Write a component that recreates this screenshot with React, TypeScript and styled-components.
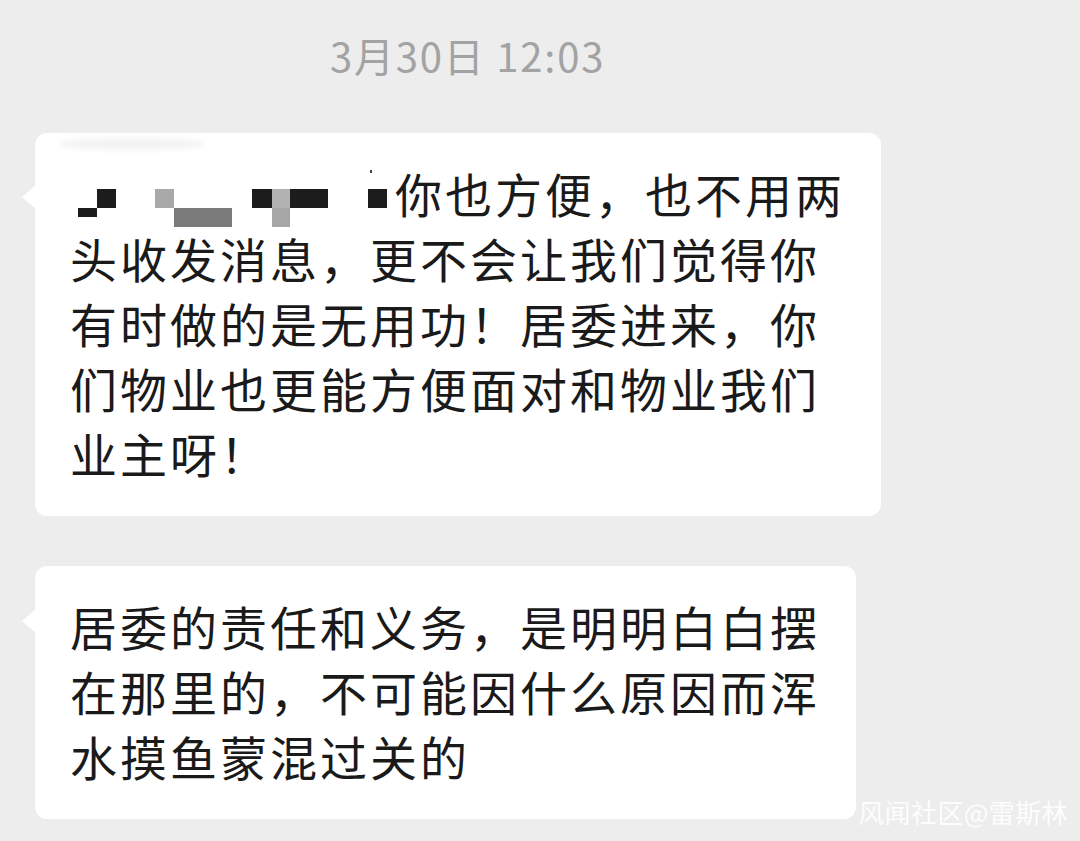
import styled, { createGlobalStyle } from "styled-components";

const GlobalStyle = createGlobalStyle`
  html, body {
    margin: 0;
    padding: 0;
    background: #ededed;
  }
  body {
    font-family: "Noto Sans CJK SC", "Noto Sans", sans-serif;
  }
`;

const firstBubble = [
  "头收发消息，更不会让我们觉得你",
  "有时做的是无用功！居委进来，你",
  "们物业也更能方便面对和物业我们",
  "业主呀！",
];

const secondBubble = [
  "居委的责任和义务，是明明白白摆",
  "在那里的，不可能因什么原因而浑",
  "水摸鱼蒙混过关的",
];

function Censored(): JSX.Element {
  return (
    <CensorSvg width={325} height={65} viewBox="0 0 325 65">
      <rect x={8} y={48} width={19} height={9} fill="#1c1c1c" />
      <rect x={27} y={29} width={19} height={19} fill="#1c1c1c" />
      <rect x={85} y={29} width={19} height={19} fill="#a9a9a9" />
      <rect x={104} y={48} width={58} height={19} fill="#7a7a7a" />
      <rect x={182} y={29} width={20} height={19} fill="#1c1c1c" />
      <rect x={202} y={29} width={18} height={19} fill="#b2b2b2" />
      <rect x={202} y={48} width={18} height={19} fill="#a6a6a6" />
      <rect x={220} y={29} width={38} height={19} fill="#1c1c1c" />
      <rect x={298} y={29} width={19} height={19} fill="#1c1c1c" />
      <rect x={300} y={10} width={2} height={3} fill="#444" />
    </CensorSvg>
  );
}

export default function App(): JSX.Element {
  return (
    <>
      <GlobalStyle />
      <Page>
        <TimeStamp>3月30日 12:03</TimeStamp>
        <Bubble $tail={53}>
          <Smudge />
          <Line>
            <Censored />
            <span>你也方便，也不用两</span>
          </Line>
          {firstBubble.map((line) => (
            <Line key={line}>{line}</Line>
          ))}
        </Bubble>
        <Bubble $tail={44}>
          {secondBubble.map((line) => (
            <Line key={line}>{line}</Line>
          ))}
        </Bubble>
        <Watermark>风闻社区@雷斯林</Watermark>
      </Page>
    </>
  );
}

const Page = styled.div`
  position: relative;
  width: 1080px;
  height: 841px;
  overflow: hidden;
  background: #ededed;
  padding: 30px 0 0 35px;
  box-sizing: border-box;
  display: flex;
  flex-direction: column;
  align-items: flex-start;
`;

const TimeStamp = styled.div`
  height: 50px;
  line-height: 50px;
  margin: 0 0 53px 295px;
  font-size: 40px;
  letter-spacing: 1.8px;
  color: #a3a3a3;
`;

const Bubble = styled.div<{ $tail: number }>`
  position: relative;
  background: #ffffff;
  border-radius: 12px;
  padding: 27px 36px 31px 35px;
  margin-bottom: 50px;
  display: flex;
  flex-direction: column;

  &::before {
    content: "";
    position: absolute;
    left: -13px;
    top: ${(p) => p.$tail}px;
    border-style: solid;
    border-width: 11px 13px 11px 0;
    border-color: transparent #ffffff transparent transparent;
  }
`;

const Smudge = styled.div`
  position: absolute;
  left: 22px;
  top: 6px;
  width: 150px;
  height: 10px;
  border-radius: 50%;
  background: rgba(0, 0, 0, 0.06);
  filter: blur(3px);
`;

const Line = styled.div`
  display: flex;
  align-items: flex-start;
  height: 65px;
  line-height: 65px;
  font-size: 47px;
  letter-spacing: 3px;
  color: #1a1a1a;
  white-space: nowrap;
`;

const CensorSvg = styled.svg`
  flex: none;
  overflow: visible;
`;

const Watermark = styled.div`
  position: absolute;
  right: 12px;
  bottom: 14px;
  font-size: 26px;
  line-height: 30px;
  letter-spacing: 0.4px;
  color: rgba(255, 255, 255, 0.92);
`;
